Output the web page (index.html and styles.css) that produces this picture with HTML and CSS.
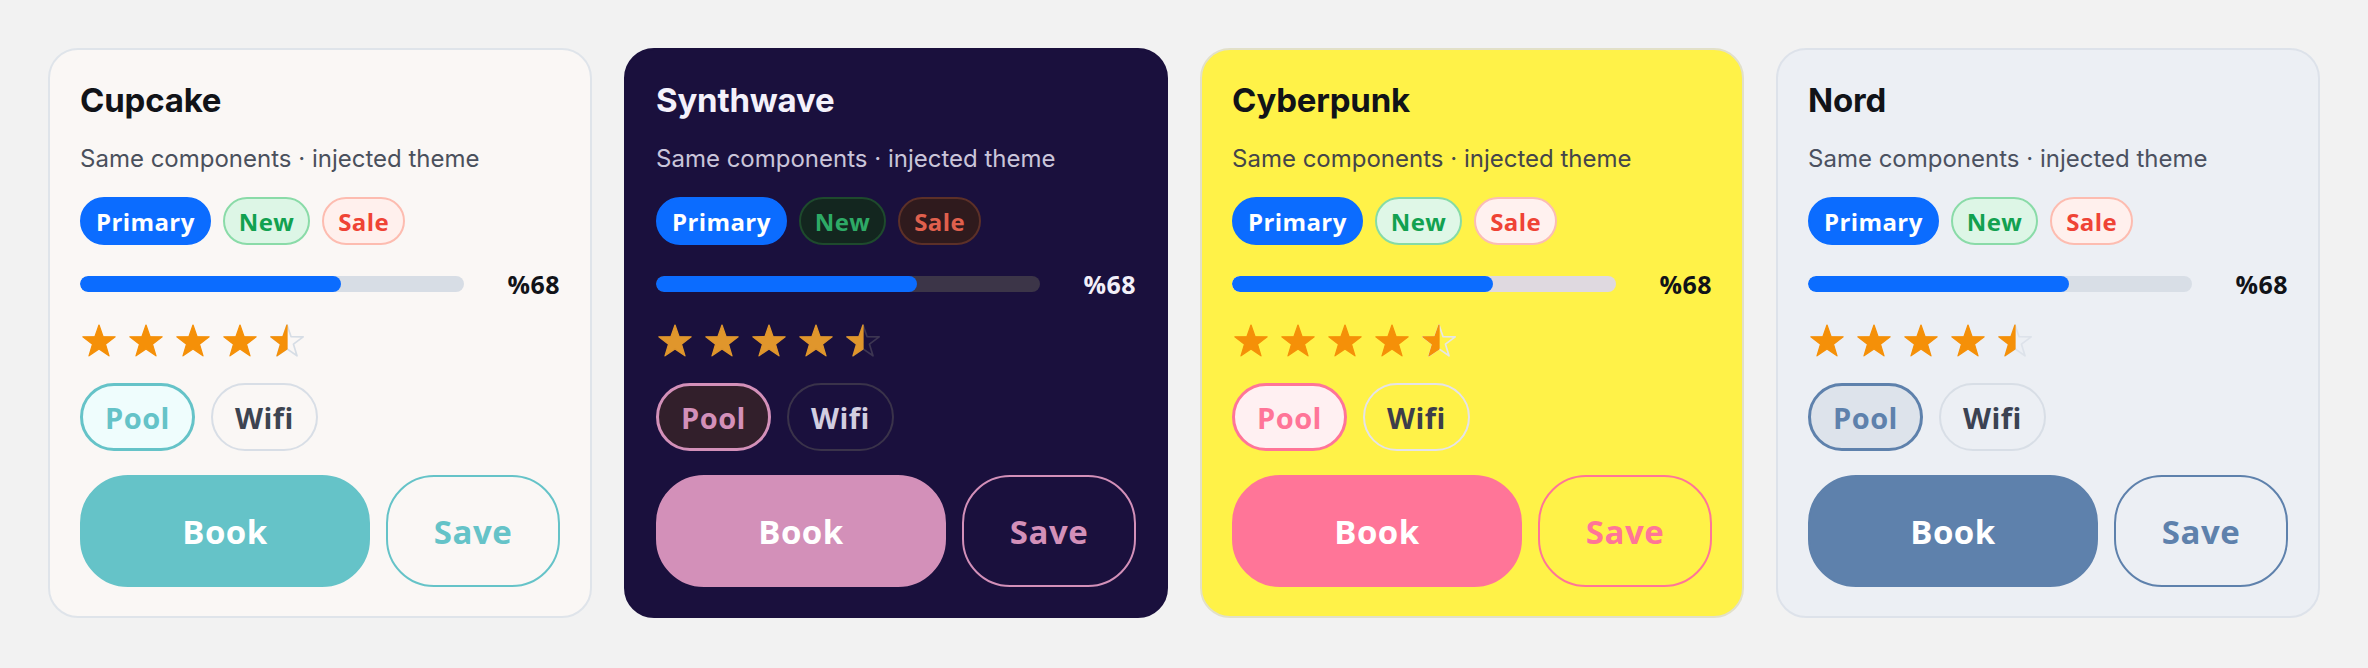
FILE: index.html
```html
<!DOCTYPE html>
<html lang="en">
<head>
  <meta charset="UTF-8">
  <title>Theme Injection</title>
  <link rel="stylesheet" href="styles.css">
</head>
<body>
  <main class="board">

    <section class="card theme-cupcake">
      <h2 class="card-title">Cupcake</h2>
      <p class="card-sub">Same components · injected theme</p>
      <div class="badges">
        <span class="badge badge-primary">Primary</span>
        <span class="badge badge-new">New</span>
        <span class="badge badge-sale">Sale</span>
      </div>
      <div class="progress">
        <div class="track"><div class="fill" style="width:68%"></div></div>
        <span class="pct">%68</span>
      </div>
      <div class="rating">
        <svg class="star" viewBox="0 0 32 32"><path class="on" d="M16 1 L19.76 11.82 L31.22 12.06 L22.09 18.98 L25.4 29.94 L16 23.4 L6.6 29.94 L9.91 18.98 L0.78 12.06 L12.24 11.82 Z"/></svg>
        <svg class="star" viewBox="0 0 32 32"><path class="on" d="M16 1 L19.76 11.82 L31.22 12.06 L22.09 18.98 L25.4 29.94 L16 23.4 L6.6 29.94 L9.91 18.98 L0.78 12.06 L12.24 11.82 Z"/></svg>
        <svg class="star" viewBox="0 0 32 32"><path class="on" d="M16 1 L19.76 11.82 L31.22 12.06 L22.09 18.98 L25.4 29.94 L16 23.4 L6.6 29.94 L9.91 18.98 L0.78 12.06 L12.24 11.82 Z"/></svg>
        <svg class="star" viewBox="0 0 32 32"><path class="on" d="M16 1 L19.76 11.82 L31.22 12.06 L22.09 18.98 L25.4 29.94 L16 23.4 L6.6 29.94 L9.91 18.98 L0.78 12.06 L12.24 11.82 Z"/></svg>
        <svg class="star" viewBox="0 0 32 32"><path class="off" d="M16 1 L19.76 11.82 L31.22 12.06 L22.09 18.98 L25.4 29.94 L16 23.4 L6.6 29.94 L9.91 18.98 L0.78 12.06 L12.24 11.82 Z"/><path class="on" d="M16 1 L16 23.4 L6.6 29.94 L9.91 18.98 L0.78 12.06 L12.24 11.82 Z"/></svg>
      </div>
      <div class="chips">
        <span class="chip chip-on">Pool</span>
        <span class="chip">Wifi</span>
      </div>
      <div class="actions">
        <button class="btn btn-solid">Book</button>
        <button class="btn btn-outline">Save</button>
      </div>
    </section>

    <section class="card theme-synthwave">
      <h2 class="card-title">Synthwave</h2>
      <p class="card-sub">Same components · injected theme</p>
      <div class="badges">
        <span class="badge badge-primary">Primary</span>
        <span class="badge badge-new">New</span>
        <span class="badge badge-sale">Sale</span>
      </div>
      <div class="progress">
        <div class="track"><div class="fill" style="width:68%"></div></div>
        <span class="pct">%68</span>
      </div>
      <div class="rating">
        <svg class="star" viewBox="0 0 32 32"><path class="on" d="M16 1 L19.76 11.82 L31.22 12.06 L22.09 18.98 L25.4 29.94 L16 23.4 L6.6 29.94 L9.91 18.98 L0.78 12.06 L12.24 11.82 Z"/></svg>
        <svg class="star" viewBox="0 0 32 32"><path class="on" d="M16 1 L19.76 11.82 L31.22 12.06 L22.09 18.98 L25.4 29.94 L16 23.4 L6.6 29.94 L9.91 18.98 L0.78 12.06 L12.24 11.82 Z"/></svg>
        <svg class="star" viewBox="0 0 32 32"><path class="on" d="M16 1 L19.76 11.82 L31.22 12.06 L22.09 18.98 L25.4 29.94 L16 23.4 L6.6 29.94 L9.91 18.98 L0.78 12.06 L12.24 11.82 Z"/></svg>
        <svg class="star" viewBox="0 0 32 32"><path class="on" d="M16 1 L19.76 11.82 L31.22 12.06 L22.09 18.98 L25.4 29.94 L16 23.4 L6.6 29.94 L9.91 18.98 L0.78 12.06 L12.24 11.82 Z"/></svg>
        <svg class="star" viewBox="0 0 32 32"><path class="off" d="M16 1 L19.76 11.82 L31.22 12.06 L22.09 18.98 L25.4 29.94 L16 23.4 L6.6 29.94 L9.91 18.98 L0.78 12.06 L12.24 11.82 Z"/><path class="on" d="M16 1 L16 23.4 L6.6 29.94 L9.91 18.98 L0.78 12.06 L12.24 11.82 Z"/></svg>
      </div>
      <div class="chips">
        <span class="chip chip-on">Pool</span>
        <span class="chip">Wifi</span>
      </div>
      <div class="actions">
        <button class="btn btn-solid">Book</button>
        <button class="btn btn-outline">Save</button>
      </div>
    </section>

    <section class="card theme-cyberpunk">
      <h2 class="card-title">Cyberpunk</h2>
      <p class="card-sub">Same components · injected theme</p>
      <div class="badges">
        <span class="badge badge-primary">Primary</span>
        <span class="badge badge-new">New</span>
        <span class="badge badge-sale">Sale</span>
      </div>
      <div class="progress">
        <div class="track"><div class="fill" style="width:68%"></div></div>
        <span class="pct">%68</span>
      </div>
      <div class="rating">
        <svg class="star" viewBox="0 0 32 32"><path class="on" d="M16 1 L19.76 11.82 L31.22 12.06 L22.09 18.98 L25.4 29.94 L16 23.4 L6.6 29.94 L9.91 18.98 L0.78 12.06 L12.24 11.82 Z"/></svg>
        <svg class="star" viewBox="0 0 32 32"><path class="on" d="M16 1 L19.76 11.82 L31.22 12.06 L22.09 18.98 L25.4 29.94 L16 23.4 L6.6 29.94 L9.91 18.98 L0.78 12.06 L12.24 11.82 Z"/></svg>
        <svg class="star" viewBox="0 0 32 32"><path class="on" d="M16 1 L19.76 11.82 L31.22 12.06 L22.09 18.98 L25.4 29.94 L16 23.4 L6.6 29.94 L9.91 18.98 L0.78 12.06 L12.24 11.82 Z"/></svg>
        <svg class="star" viewBox="0 0 32 32"><path class="on" d="M16 1 L19.76 11.82 L31.22 12.06 L22.09 18.98 L25.4 29.94 L16 23.4 L6.6 29.94 L9.91 18.98 L0.78 12.06 L12.24 11.82 Z"/></svg>
        <svg class="star" viewBox="0 0 32 32"><path class="off" d="M16 1 L19.76 11.82 L31.22 12.06 L22.09 18.98 L25.4 29.94 L16 23.4 L6.6 29.94 L9.91 18.98 L0.78 12.06 L12.24 11.82 Z"/><path class="on" d="M16 1 L16 23.4 L6.6 29.94 L9.91 18.98 L0.78 12.06 L12.24 11.82 Z"/></svg>
      </div>
      <div class="chips">
        <span class="chip chip-on">Pool</span>
        <span class="chip">Wifi</span>
      </div>
      <div class="actions">
        <button class="btn btn-solid">Book</button>
        <button class="btn btn-outline">Save</button>
      </div>
    </section>

    <section class="card theme-nord">
      <h2 class="card-title">Nord</h2>
      <p class="card-sub">Same components · injected theme</p>
      <div class="badges">
        <span class="badge badge-primary">Primary</span>
        <span class="badge badge-new">New</span>
        <span class="badge badge-sale">Sale</span>
      </div>
      <div class="progress">
        <div class="track"><div class="fill" style="width:68%"></div></div>
        <span class="pct">%68</span>
      </div>
      <div class="rating">
        <svg class="star" viewBox="0 0 32 32"><path class="on" d="M16 1 L19.76 11.82 L31.22 12.06 L22.09 18.98 L25.4 29.94 L16 23.4 L6.6 29.94 L9.91 18.98 L0.78 12.06 L12.24 11.82 Z"/></svg>
        <svg class="star" viewBox="0 0 32 32"><path class="on" d="M16 1 L19.76 11.82 L31.22 12.06 L22.09 18.98 L25.4 29.94 L16 23.4 L6.6 29.94 L9.91 18.98 L0.78 12.06 L12.24 11.82 Z"/></svg>
        <svg class="star" viewBox="0 0 32 32"><path class="on" d="M16 1 L19.76 11.82 L31.22 12.06 L22.09 18.98 L25.4 29.94 L16 23.4 L6.6 29.94 L9.91 18.98 L0.78 12.06 L12.24 11.82 Z"/></svg>
        <svg class="star" viewBox="0 0 32 32"><path class="on" d="M16 1 L19.76 11.82 L31.22 12.06 L22.09 18.98 L25.4 29.94 L16 23.4 L6.6 29.94 L9.91 18.98 L0.78 12.06 L12.24 11.82 Z"/></svg>
        <svg class="star" viewBox="0 0 32 32"><path class="off" d="M16 1 L19.76 11.82 L31.22 12.06 L22.09 18.98 L25.4 29.94 L16 23.4 L6.6 29.94 L9.91 18.98 L0.78 12.06 L12.24 11.82 Z"/><path class="on" d="M16 1 L16 23.4 L6.6 29.94 L9.91 18.98 L0.78 12.06 L12.24 11.82 Z"/></svg>
      </div>
      <div class="chips">
        <span class="chip chip-on">Pool</span>
        <span class="chip">Wifi</span>
      </div>
      <div class="actions">
        <button class="btn btn-solid">Book</button>
        <button class="btn btn-outline">Save</button>
      </div>
    </section>

  </main>
</body>
</html>
```

FILE: styles.css
```css
* {
  box-sizing: border-box;
}
html, body {
  margin: 0;
  padding: 0;
}
body {
  background: #f2f2f2;
  font-family: Inter, "Noto Sans", sans-serif;
  width: 2368px;
  height: 668px;
  overflow: hidden;
}

/* themes */
.theme-cupcake {
  --bg: #faf7f5;
  --line: #dfe4ea;
  --title: #111318;
  --sub: #4a505c;
  --track: #d7dde5;
  --pct: #111318;
  --star: #f59008;
  --star-off: #d6dde5;
  --accent: #65c3c8;
  --accent-soft: #effdfd;
  --chip-line: #d8dee6;
  --chip-text: #3d4451;
  --new-bg: #ddf6e6;
  --new-line: #8adba8;
  --new-text: #12a150;
  --sale-bg: #fff0ed;
  --sale-line: #fdbcb0;
  --sale-text: #ef4335;
}
.theme-synthwave {
  --bg: #1a103d;
  --line: #1a103d;
  --title: #f4f1fb;
  --sub: #cac5da;
  --track: #3c3548;
  --pct: #f2eff9;
  --star: #e0962c;
  --star-off: #3d3652;
  --accent: #d390b9;
  --accent-soft: #321f2b;
  --chip-line: #3a334a;
  --chip-text: #d2cee0;
  --new-bg: #13261f;
  --new-line: #1e4a2d;
  --new-text: #2eaa66;
  --sale-bg: #2f1a1d;
  --sale-line: #5c3028;
  --sale-text: #e0604d;
}
.theme-cyberpunk {
  --bg: #fff248;
  --line: #e2e0c8;
  --title: #111318;
  --sub: #45454a;
  --track: #dfd9e0;
  --pct: #111318;
  --star: #f59008;
  --star-off: #e6e6e6;
  --accent: #ff7598;
  --accent-soft: #fff0f2;
  --chip-line: #e5e3e8;
  --chip-text: #3d3d4a;
  --new-bg: #dff7e7;
  --new-line: #86dba6;
  --new-text: #12a150;
  --sale-bg: #fff1ef;
  --sale-line: #fbbcb6;
  --sale-text: #ef4335;
}
.theme-nord {
  --bg: #eceff4;
  --line: #dde2ea;
  --title: #111318;
  --sub: #4b5160;
  --track: #d8dee6;
  --pct: #111318;
  --star: #f59008;
  --star-off: #dde2ea;
  --accent: #5e81ac;
  --accent-soft: #dde3eb;
  --chip-line: #d8dee6;
  --chip-text: #3b4252;
  --new-bg: #ddf6e6;
  --new-line: #8adba8;
  --new-text: #12a150;
  --sale-bg: #fff0ed;
  --sale-line: #fdbcb0;
  --sale-text: #ef4335;
}

.board {
  display: grid;
  grid-template-columns: repeat(4, 1fr);
  gap: 32px;
  padding: 48px;
}
.card {
  background: var(--bg);
  border: 2px solid var(--line);
  border-radius: 30px;
  padding: 30px 30px 29px;
  display: flex;
  flex-direction: column;
  gap: 24px;
}
.card-title {
  margin: 0;
  font-size: 33px;
  line-height: 40px;
  font-weight: 700;
  color: var(--title);
  letter-spacing: -0.2px;
}
.card-sub {
  margin: 0;
  font-size: 24px;
  line-height: 29px;
  color: var(--sub);
}

.badges {
  display: flex;
  gap: 12px;
}
.badge {
  height: 48px;
  padding: 0 14px;
  border: 2px solid;
  border-radius: 999px;
  display: flex;
  align-items: center;
  font-family: "Open Sans", sans-serif;
  font-weight: 700;
  font-size: 24px;
  letter-spacing: 0.4px;
}
.badge-primary {
  background: #0b6cff;
  border-color: #0b6cff;
  color: #fff;
}
.badge-new {
  background: var(--new-bg);
  border-color: var(--new-line);
  color: var(--new-text);
}
.badge-sale {
  background: var(--sale-bg);
  border-color: var(--sale-line);
  color: var(--sale-text);
}

.progress {
  height: 30px;
  display: flex;
  align-items: center;
  gap: 24px;
}
.track {
  flex: 1;
  height: 16px;
  border-radius: 8px;
  background: var(--track);
  overflow: hidden;
}
.fill {
  height: 100%;
  border-radius: 8px;
  background: #0b6cff;
}
.pct {
  width: 72px;
  text-align: right;
  font-family: "Open Sans", sans-serif;
  font-weight: 700;
  font-size: 25px;
  letter-spacing: 0.5px;
  color: var(--pct);
}

.rating {
  height: 36px;
  display: flex;
  align-items: center;
  gap: 13px;
  padding-left: 2px;
}
.star {
  width: 34px;
  height: 34px;
}
.star .on {
  fill: var(--star);
  stroke: var(--star);
  stroke-width: 1.2;
  stroke-linejoin: round;
}
.star .off {
  fill: none;
  stroke: var(--star-off);
  stroke-width: 1.6;
  stroke-linejoin: round;
}

.chips {
  display: flex;
  gap: 16px;
}
.chip {
  height: 68px;
  padding: 0 22px;
  border: 2px solid var(--chip-line);
  border-radius: 999px;
  display: flex;
  align-items: center;
  font-family: "Open Sans", sans-serif;
  font-weight: 700;
  font-size: 29px;
  letter-spacing: 0.5px;
  color: var(--chip-text);
}
.chip-on {
  border-width: 3px;
  border-color: var(--accent);
  background: var(--accent-soft);
  color: var(--accent);
}

.actions {
  display: grid;
  grid-template-columns: 5fr 3fr;
  gap: 16px;
}
.btn {
  height: 112px;
  border-radius: 48px;
  border: 2px solid var(--accent);
  font-family: "Open Sans", sans-serif;
  font-weight: 700;
  font-size: 33px;
  letter-spacing: 0.5px;
  cursor: pointer;
}
.btn-solid {
  background: var(--accent);
  color: #fff;
}
.btn-outline {
  background: transparent;
  color: var(--accent);
}
```
